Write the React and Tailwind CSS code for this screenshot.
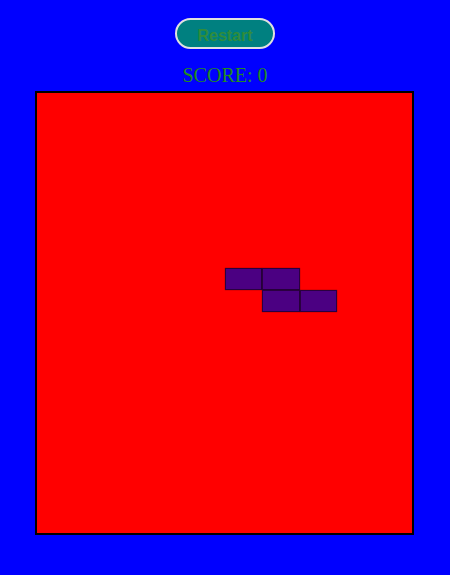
const cells = [
  [5, 8],
  [6, 8],
  [6, 9],
  [7, 9],
];

export default function App() {
  return (
    <div className="w-[450px] h-[575px] bg-[#0000ff] flex flex-col items-center pt-[18px]">
      <button className="flex items-center justify-center w-[100px] h-[31px] pt-[4px] rounded-full bg-[#008080] border-2 border-[#e0e0e0]">
        <span className="[font-family:'Liberation_Sans',Arial,sans-serif] text-[16px] [font-weight:700] leading-none text-[#2f8c3c]">
          Restart
        </span>
      </button>
      <div className="mt-[15px] text-[20px] leading-[22px] text-[#228b22] [font-family:'Liberation_Serif','Times_New_Roman',serif]">
        SCORE: 0
      </div>
      <div className="mt-[5px] mr-[1px] border-2 border-black bg-[#ff0000]">
        <div className="relative w-[375px] h-[440px]">
          {cells.map(([c, r], i) => (
            <div
              key={i}
              className="absolute w-[37.5px] h-[22px] bg-[#4b0082] border border-[#2a0040] shadow-[0_0_1px_rgba(0,0,0,0.6)]"
              style={{ left: c * 37.5, top: r * 22 - 1 }}
            />
          ))}
        </div>
      </div>
    </div>
  );
}
